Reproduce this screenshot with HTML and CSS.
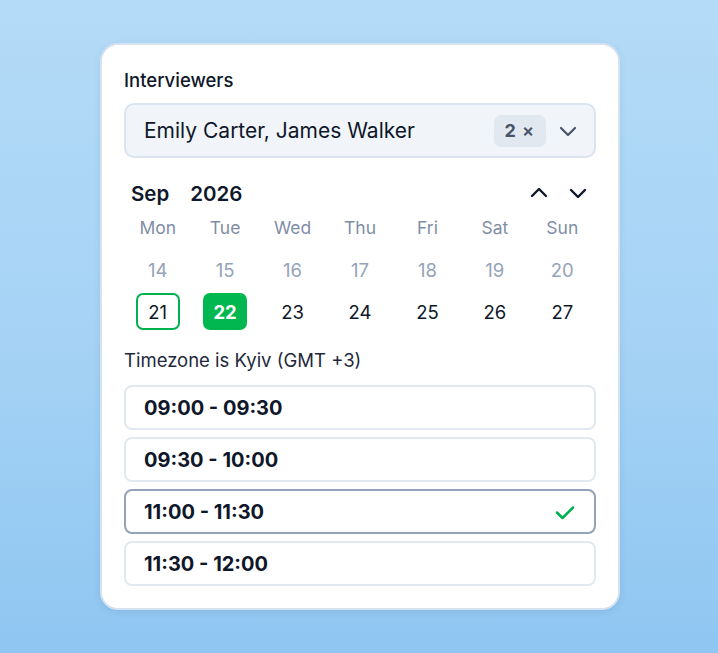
FILE: index.html
```html
<!DOCTYPE html>
<html lang="en">
<head>
<meta charset="utf-8">
<title>Interview scheduler</title>
<link rel="stylesheet" href="styles.css">
</head>
<body>
<div class="card">
  <div class="label">Interviewers</div>
  <div class="select">
    <span class="select-text">Emily Carter, James Walker</span>
    <span class="badge">2 <span class="x">×</span></span>
    <svg class="chev" width="20" height="20" viewBox="0 0 20 20"><path d="M3 7 L10 14 L17 7" fill="none" stroke="#475569" stroke-width="2.2" stroke-linecap="round" stroke-linejoin="round"/></svg>
  </div>
  <div class="cal-head">
    <div class="month"><span>Sep</span><span>2026</span></div>
    <div class="arrows">
      <svg width="20" height="20" viewBox="0 0 20 20"><path d="M3 13 L10 6 L17 13" fill="none" stroke="#0f172a" stroke-width="2.4" stroke-linecap="round" stroke-linejoin="round"/></svg>
      <svg width="20" height="20" viewBox="0 0 20 20"><path d="M3 7 L10 14 L17 7" fill="none" stroke="#0f172a" stroke-width="2.4" stroke-linecap="round" stroke-linejoin="round"/></svg>
    </div>
  </div>
  <div class="grid">
    <div class="wd">Mon</div><div class="wd">Tue</div><div class="wd">Wed</div><div class="wd">Thu</div><div class="wd">Fri</div><div class="wd">Sat</div><div class="wd">Sun</div>
    <div class="d past">14</div><div class="d past">15</div><div class="d past">16</div><div class="d past">17</div><div class="d past">18</div><div class="d past">19</div><div class="d past">20</div>
    <div class="d"><span class="today">21</span></div><div class="d"><span class="sel">22</span></div><div class="d">23</div><div class="d">24</div><div class="d">25</div><div class="d">26</div><div class="d">27</div>
  </div>
  <div class="tz">Timezone is Kyiv (GMT +3)</div>
  <div class="slots">
    <div class="slot">09:00 - 09:30</div>
    <div class="slot">09:30 - 10:00</div>
    <div class="slot active">11:00 - 11:30
      <svg width="22" height="22" viewBox="0 0 22 22"><path d="M3 11.5 L8.5 17 L19 6.5" fill="none" stroke="#00b14f" stroke-width="2.5" stroke-linecap="round" stroke-linejoin="round"/></svg>
    </div>
    <div class="slot">11:30 - 12:00</div>
  </div>
</div>
</body>
</html>
```
FILE: styles.css
```css
* { box-sizing: border-box; }
html, body { margin: 0; height: 100%; }
body {
  font-family: "Inter", "Noto Sans", sans-serif;
  color: #0f172a;
  background: linear-gradient(180deg, #b4dbf7 0%, #a6d3f5 50%, #8fc6f1 100%);
  display: flex;
  align-items: center;
  justify-content: center;
  padding-left: 2px;
}
.card {
  width: 520px;
  background: #fff;
  border: 2px solid #d5e2ef;
  border-radius: 18px;
  padding: 23px 22px 22px;
  box-shadow: 0 2px 6px rgba(40, 90, 140, 0.12);
}
.label {
  font-size: 18.5px;
  line-height: 24px;
  font-weight: 500;
  color: #0f172a;
}
.select {
  margin-top: 11px;
  height: 55px;
  background: #f1f5f9;
  border: 2px solid #dbe4ee;
  border-radius: 10px;
  display: flex;
  align-items: center;
  padding: 0 16px 0 18px;
}
.select-text {
  flex: 1;
  font-size: 21px;
  color: #0f172a;
}
.badge {
  background: #e2e8f0;
  border-radius: 7px;
  height: 32px;
  padding: 0 12px 0 11px;
  display: flex;
  align-items: center;
  gap: 6px;
  font-size: 18px;
  font-weight: 700;
  color: #475569;
}
.badge .x { font-weight: 600; font-size: 18px; }
.chev { margin-left: 12px; }
.cal-head {
  margin-top: 22px;
  height: 26px;
  display: flex;
  align-items: center;
  justify-content: space-between;
  padding: 0 8px 0 7px;
}
.month {
  display: flex;
  gap: 21px;
  font-size: 20.5px;
  font-weight: 600;
}
.arrows { display: flex; gap: 19px; }
.arrows svg { display: block; }
.grid {
  margin-top: 3px;
  display: grid;
  grid-template-columns: repeat(7, 1fr);
  grid-auto-rows: 37px;
  row-gap: 5px;
}
.wd, .d {
  display: flex;
  align-items: center;
  justify-content: center;
  font-size: 17.5px;
}
.wd { color: #7f8ea6; }
.d { color: #0f172a; font-size: 18.5px; }
.d.past { color: #94a3b8; }
.today, .sel {
  width: 44px;
  height: 37px;
  border-radius: 7px;
  display: flex;
  align-items: center;
  justify-content: center;
}
.today { border: 2px solid #00b14f; }
.sel { background: #00b84f; color: #fff; font-weight: 700; }
.tz {
  margin-top: 18px;
  font-size: 18.5px;
  line-height: 24px;
  color: #1e293b;
}
.slots {
  margin-top: 13px;
  display: flex;
  flex-direction: column;
  gap: 7px;
}
.slot {
  height: 45px;
  border: 2px solid #e2e8f0;
  border-radius: 8px;
  display: flex;
  align-items: center;
  justify-content: space-between;
  padding: 0 18px;
  font-size: 20px;
  font-weight: 700;
  color: #0f172a;
}
.slot.active { border-color: #94a3b8; }
.slot svg { display: block; }
```
